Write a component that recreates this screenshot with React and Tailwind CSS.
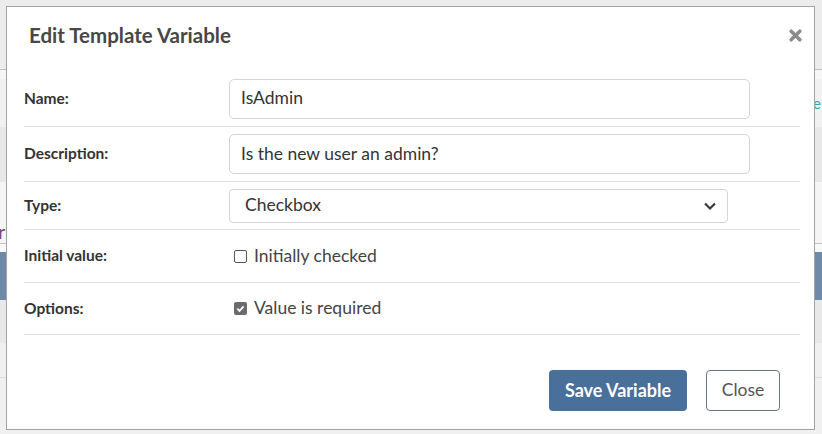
import React from 'react'

const font = { fontFamily: 'Lato, "Open Sans", "Liberation Sans", sans-serif' }

function Row({ label, children, className = '' }) {
  return (
    <div className={`flex items-center border-b border-[#dedede] ${className}`}>
      <div className="w-[205px] shrink-0 text-[15.5px] font-bold text-[#333]">{label}</div>
      <div className="flex-1">{children}</div>
    </div>
  )
}

function Check({ checked, label }) {
  return (
    <div className="flex items-center gap-[7px] pl-[5px] text-[17.5px] text-[#444]">
      {checked ? (
        <span className="flex h-[13px] w-[13px] items-center justify-center rounded-[2px] bg-[#6b6b6b]">
          <svg width="9" height="9" viewBox="0 0 10 10">
            <path d="M1.5 5.2l2.4 2.4 4.6-5" fill="none" stroke="#fff" strokeWidth="2" />
          </svg>
        </span>
      ) : (
        <span className="h-[13px] w-[13px] rounded-[2px] border border-[#555] bg-white" />
      )}
      <span>{label}</span>
    </div>
  )
}

export default function App() {
  return (
    <div className="relative h-[434px] w-[822px] overflow-hidden bg-[#eeeeee]" style={font}>
      {/* page behind the dialog */}
      <div className="h-[69px] bg-[#ececec]" />
      <div className="h-px bg-[#bdbdbd]" />
      <div className="h-[9px] bg-[#f6f6f6]" />
      <div className="flex h-[48px] items-center justify-end bg-[#f1f1f1] pr-[1px] text-[15px] text-[#3aa6a6]">e</div>
      <div className="h-[55px] bg-[#e8e8e8]" />
      <div className="flex h-[61px] items-end bg-[#f5f5f5] pb-[2px] text-[20px] leading-none text-[#7a4a7a]">
        <span className="-ml-[2px]">r</span>
      </div>
      <div className="h-px bg-[#c4c4c4]" />
      <div className="h-[8px] bg-[#f8f8f8]" />
      <div className="h-[48px] bg-[#6f8aa8]" />
      <div className="h-[43px] bg-[#e8e8e8]" />
      <div className="h-[34px] bg-[#f0f0f0]" />
      <div className="h-px bg-[#dcdcdc]" />
      <div className="h-[66px] bg-[#f0f0f0]" />

      {/* dialog */}
      <div className="absolute left-[6px] top-[6px] flex h-[424px] w-[809px] flex-col border border-[#a3a3a3] bg-white">
        <div className="flex h-[64px] items-center justify-between pb-[7px] pl-[22px] pr-[12px]">
          <h2 className="text-[20.5px] font-bold text-[#474747]">Edit Template Variable</h2>
          <svg width="13" height="13" viewBox="0 0 12 12">
            <path d="M2 2l8 8M10 2l-8 8" stroke="#8a8a8a" strokeWidth="3.2" strokeLinecap="round" />
          </svg>
        </div>

        <div className="pl-[17px] pr-[14px]">
          <Row label="Name:" className="h-[56px]">
            <div className="flex h-[40px] w-[521px] items-center rounded-[5px] border border-[#d3d3dc] px-[11px] text-[17.5px] text-[#333]">
              IsAdmin
            </div>
          </Row>
          <Row label="Description:" className="h-[55px]">
            <div className="flex h-[40px] w-[521px] items-center rounded-[5px] border border-[#d3d3dc] px-[11px] text-[17.5px] text-[#333]">
              Is the new user an admin?
            </div>
          </Row>
          <Row label="Type:" className="h-[48px]">
            <div className="flex h-[34px] w-[499px] items-center justify-between rounded-[4px] border border-[#d3d3dc] pl-[15px] pr-[10px] text-[17.5px] text-[#333]">
              <span>Checkbox</span>
              <svg width="14" height="10" viewBox="0 0 14 10">
                <path d="M2 2.5l5 5 5-5" fill="none" stroke="#343a40" strokeWidth="2.2" />
              </svg>
            </div>
          </Row>
          <Row label="Initial value:" className="h-[53px]">
            <Check checked={false} label="Initially checked" />
          </Row>
          <Row label="Options:" className="h-[52px]">
            <Check checked label="Value is required" />
          </Row>
        </div>

        <div className="flex flex-1 items-center justify-end gap-[19px] pr-[34px] pt-[16px]">
          <button className="h-[41px] w-[138px] rounded-[4px] bg-[#48709b] text-[18px] font-bold text-white">
            Save Variable
          </button>
          <button className="h-[41px] w-[74px] rounded-[4px] border border-[#6c757d] bg-white text-[17.5px] text-[#555]">
            Close
          </button>
        </div>
      </div>
    </div>
  )
}
